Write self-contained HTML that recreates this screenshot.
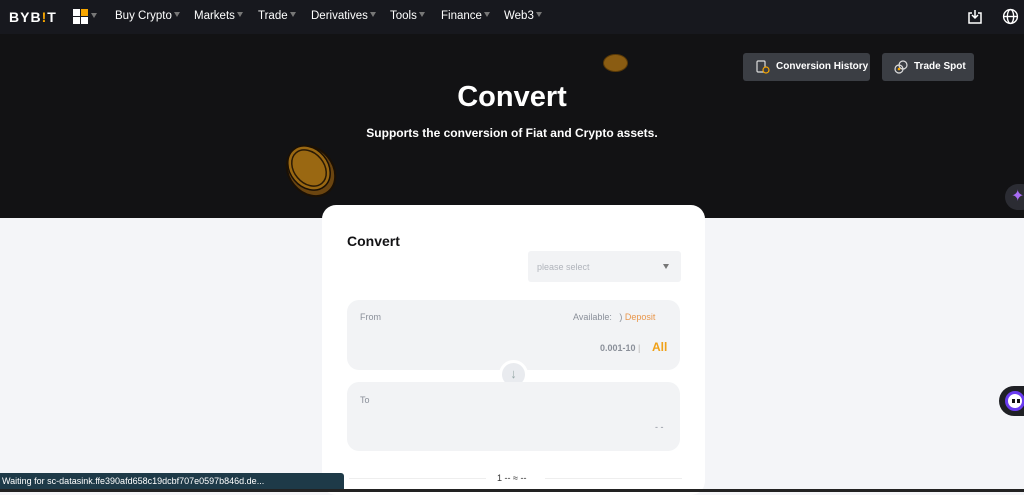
<!DOCTYPE html>
<html><head><style>
*{margin:0;padding:0;box-sizing:border-box}
body{width:1024px;height:492px;overflow:hidden;background:#f4f5f8;font-family:"Liberation Sans",sans-serif;position:relative}
.nav{position:absolute;left:0;top:0;width:1024px;height:34px;background:#17181e;color:#fff;font-size:11.5px}
.nav span{position:absolute;top:10px}
.tri{display:inline-block;margin-left:2px;width:0;height:0;border-left:3px solid transparent;border-right:3px solid transparent;border-top:5px solid #777;vertical-align:2px}
.hero{position:absolute;left:0;top:34px;width:1024px;height:184px;background:#121214}
.btn{position:absolute;top:53px;height:28px;background:#3b3e44;border-radius:3px;color:#fff;font-size:10px;font-weight:bold;line-height:28px}
.card{position:absolute;left:322px;top:205px;width:383px;height:290px;background:#fff;border-radius:14px}
.box{position:absolute;left:25px;width:333px;background:#f2f3f5;border-radius:12px}
.g{color:#8a8f99;font-size:9px;position:absolute}
.sq{position:absolute;width:7px;height:7px;background:#fff}
</style></head><body>
<div class="nav">
<span style="left:9px;top:9px;font-weight:bold;font-size:14px;letter-spacing:1px">BYB<b style="color:#f7a600">!</b>T</span>
<i class="sq" style="left:73px;top:9px"></i><i class="sq" style="left:81px;top:9px;background:#f7a600"></i><i class="sq" style="left:73px;top:17px"></i><i class="sq" style="left:81px;top:17px"></i>
<span style="left:89px;top:11px"><i class="tri"></i></span>
<span style="left:115px">Buy Crypto<i class="tri"></i></span>
<span style="left:194px">Markets<i class="tri"></i></span>
<span style="left:258px">Trade<i class="tri"></i></span>
<span style="left:311px">Derivatives<i class="tri"></i></span>
<span style="left:390px">Tools<i class="tri"></i></span>
<span style="left:441px">Finance<i class="tri"></i></span>
<span style="left:504px">Web3<i class="tri"></i></span>
<svg style="position:absolute;left:967px;top:9px" width="16" height="16" viewBox="0 0 16 16" fill="none" stroke="#fff" stroke-width="1.5"><path d="M5 4H2v10h12V4h-3M8 1v8M5 6l3 3 3-3"/></svg>
<svg style="position:absolute;left:1002px;top:8px" width="17" height="17" viewBox="0 0 16 16" fill="none" stroke="#fff" stroke-width="1.3"><circle cx="8" cy="8" r="6.5"/><ellipse cx="8" cy="8" rx="3" ry="6.5"/><path d="M1.5 8h13"/></svg>
</div>
<div class="hero">
<div style="position:absolute;left:0;width:1024px;top:47px;text-align:center;color:#fff;font-size:29px;font-weight:bold">Convert</div>
<div style="position:absolute;left:0;width:1024px;top:92px;text-align:center;color:#fff;font-size:12px;font-weight:bold">Supports the conversion of Fiat and Crypto assets.</div>
<div style="position:absolute;left:603px;top:20px;width:25px;height:18px;border-radius:50%;background:#8a5c12;border:1px solid #5a3a08"></div>
<svg style="position:absolute;left:282px;top:108px" width="58" height="58" viewBox="0 0 58 58"><ellipse cx="29" cy="29" rx="22" ry="27" transform="rotate(-40 29 29)" fill="#6b4510" stroke="#1a1005" stroke-width="2"/><ellipse cx="27" cy="26" rx="19" ry="24" transform="rotate(-40 27 26)" fill="#9a6812" stroke="#1a1005" stroke-width="1.5"/><ellipse cx="27" cy="26" rx="15" ry="20" transform="rotate(-40 27 26)" fill="none" stroke="#2a1a05" stroke-width="1.5"/></svg>
<div style="position:absolute;left:1005px;top:150px;width:30px;height:26px;border-radius:13px;background:#2b2c33;color:#a86cf5;font-size:16px;padding-left:6px;line-height:26px">✦</div>
</div>
<div class="btn" style="left:743px;width:127px;padding-left:33px"><svg style="position:absolute;left:13px;top:7px" width="14" height="14" viewBox="0 0 14 14" fill="none" stroke="#ddd" stroke-width="1.2"><rect x="1" y="1" width="8" height="11" rx="1"/><circle cx="10" cy="10" r="3" stroke="#f7a600" fill="#3b3e44"/></svg>Conversion History</div>
<div class="btn" style="left:882px;width:92px;padding-left:32px"><svg style="position:absolute;left:12px;top:7px" width="14" height="14" viewBox="0 0 14 14" fill="none" stroke="#ddd" stroke-width="1.2"><circle cx="5" cy="9" r="4"/><circle cx="9" cy="5" r="4"/><circle cx="5" cy="9" r="1.3" fill="#f7a600" stroke="none"/></svg>Trade Spot</div>
<div class="card">
<div style="position:absolute;left:25px;top:28px;font-size:14px;font-weight:bold;color:#121214">Convert</div>
<div style="position:absolute;left:206px;top:46px;width:153px;height:31px;background:#f2f3f5;border-radius:3px"><span style="position:absolute;left:9px;top:11px;font-size:9px;color:#b0b4bb">please select</span><i class="tri" style="position:absolute;right:12px;top:13px;border-top-color:#777"></i></div>
<div class="box" style="top:95px;height:70px"><span class="g" style="left:13px;top:12px">From</span><span class="g" style="left:226px;top:12px">Available: &nbsp; <span>)</span> <span style="color:#e9964b">Deposit</span></span><span class="g" style="left:253px;top:43px;font-weight:bold">0.001-10 <span style="color:#ccc">|</span></span><span style="position:absolute;left:305px;top:40px;color:#f0a118;font-weight:bold;font-size:12px">All</span></div>
<div style="position:absolute;left:177px;top:155px;width:29px;height:29px;border-radius:50%;background:#e9ebef;border:3px solid #fff;color:#9aa;text-align:center;font-size:13px;line-height:22px">↓</div>
<div class="box" style="top:177px;height:69px"><span class="g" style="left:13px;top:13px">To</span><span class="g" style="left:308px;top:40px">- -</span></div>
<div style="position:absolute;left:27px;top:273px;width:137px;border-top:1px solid #eee"></div>
<div style="position:absolute;left:223px;top:273px;width:137px;border-top:1px solid #eee"></div>
<div style="position:absolute;left:175px;top:268px;font-size:9px;color:#333">1 -- ≈ --</div>
</div>
<div style="position:absolute;left:999px;top:386px;width:40px;height:30px;border-radius:15px;background:#1f2025"><div style="position:absolute;left:6px;top:5px;width:20px;height:20px;border-radius:50%;background:#fff;border:3px solid #6a3cf0"><i style="position:absolute;left:4px;top:5px;width:3px;height:4px;background:#111"></i><i style="position:absolute;left:9px;top:5px;width:3px;height:4px;background:#111"></i></div></div>
<div style="position:absolute;left:0;top:473px;width:344px;height:16px;background:#1e3a48;color:#fff;font-size:9px;padding:3px 2px;border-radius:0 3px 0 0">Waiting for sc-datasink.ffe390afd658c19dcbf707e0597b846d.de...</div>
<div style="position:absolute;left:0;top:489px;width:1024px;height:3px;background:#222"></div>
</body></html>
